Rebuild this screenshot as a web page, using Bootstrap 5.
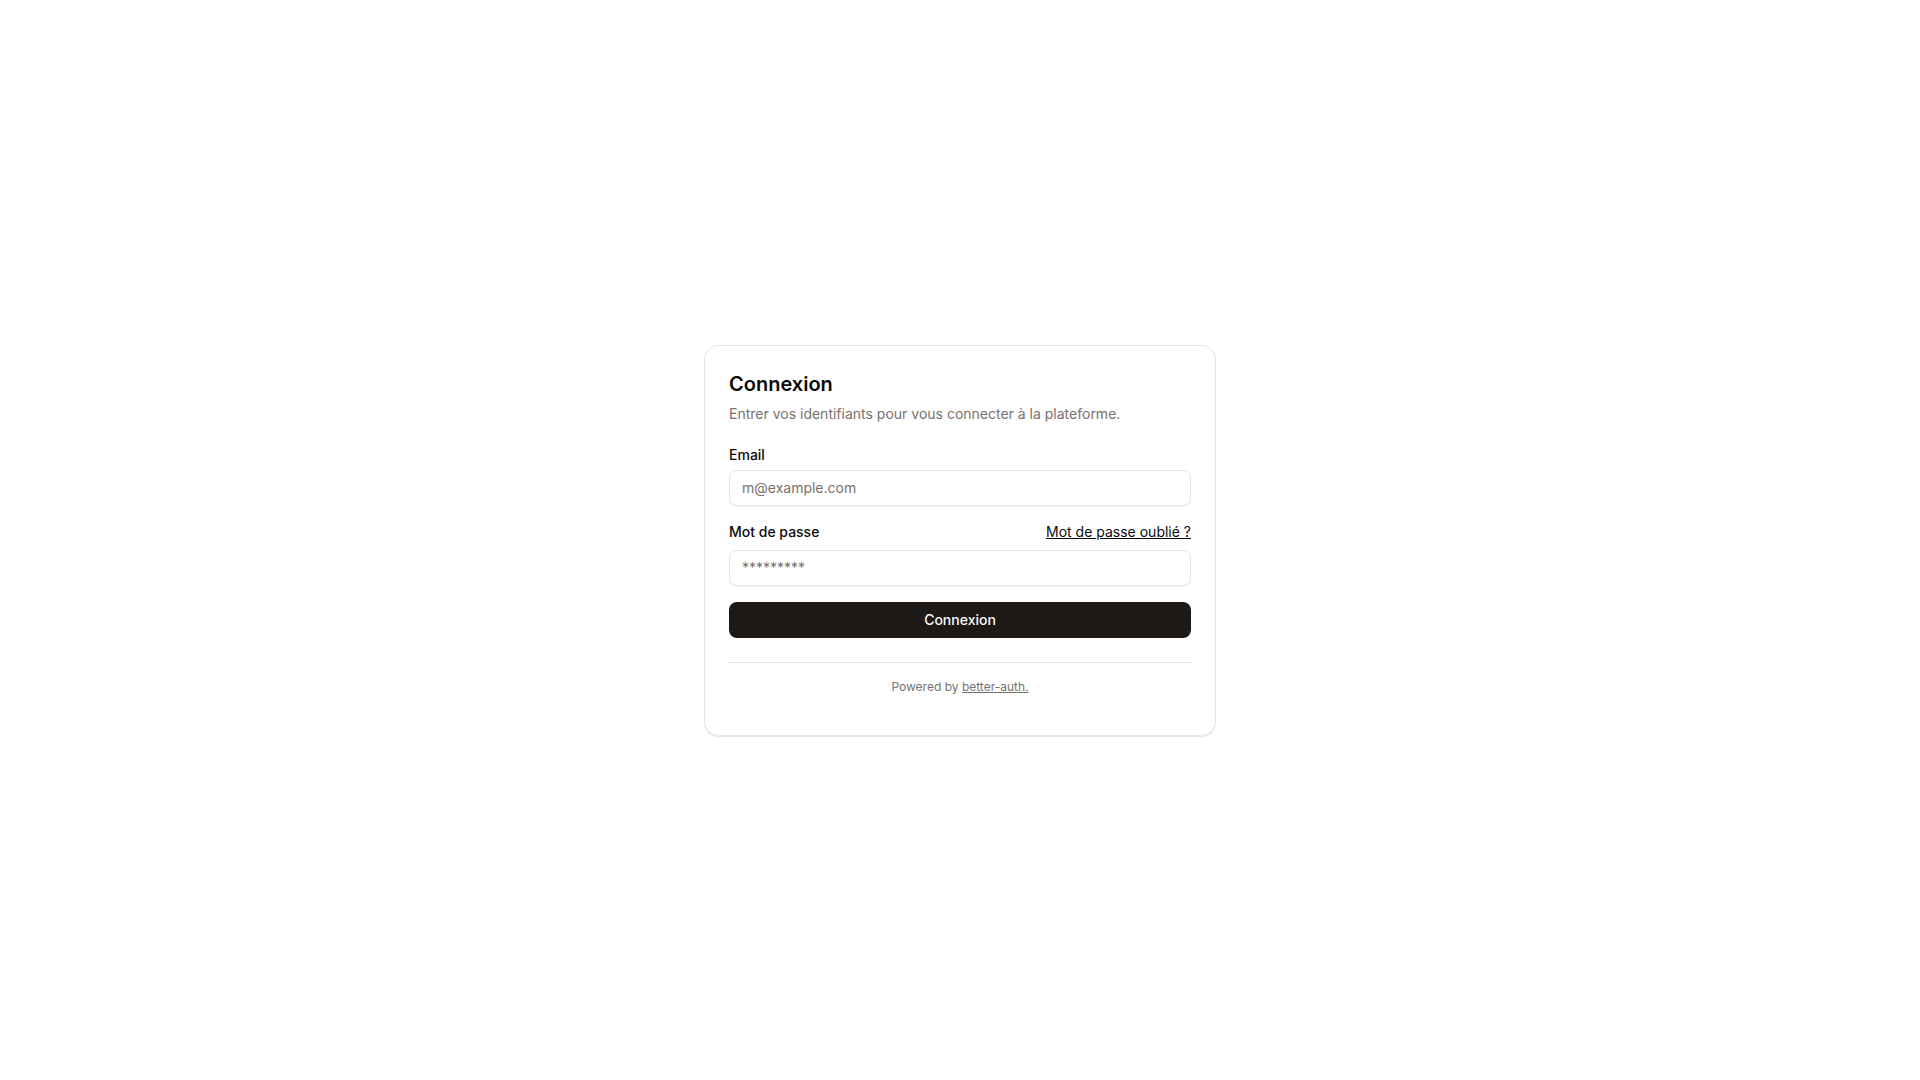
<!DOCTYPE html>
<html lang="fr">
<head>
<meta charset="utf-8">
<meta name="viewport" content="width=device-width, initial-scale=1">
<title>Connexion</title>
<link href="https://cdn.jsdelivr.net/npm/bootstrap@5.3.0/dist/css/bootstrap.min.css" rel="stylesheet">
<style>
:root { --ink: #0c0a09; --muted: #78716c; --line: #e5e5e5; }
body { font-family: Inter, sans-serif; font-size: 14px; line-height: 20px; color: var(--ink); background: #fff; }
.login-card { width: 100%; max-width: 512px; padding: 24px; border: 1px solid var(--line); border-radius: 14px; box-shadow: 0 1px 0 rgba(0,0,0,.1); }
.login-title { font-size: 20px; line-height: 28px; font-weight: 600; margin-bottom: 6px; }
.login-hint { color: var(--muted); }
.login-form label { font-weight: 500; line-height: 14px; }
.login-form .form-control { height: 36px; padding: 4px 12px; font-size: 14px; line-height: 20px; border: 1px solid var(--line); border-radius: 8px; box-shadow: 0 1px 0 rgba(0,0,0,.05); }
.login-form .form-control::placeholder { color: var(--muted); opacity: 1; }
.login-form a { color: var(--ink); }
.btn-login { --bs-btn-color: #fafaf9; --bs-btn-bg: #1c1917; --bs-btn-hover-color: #fafaf9; --bs-btn-hover-bg: #33302e; --bs-btn-border-width: 0; height: 36px; font-size: 14px; line-height: 20px; font-weight: 500; border-radius: 8px; }
.login-footer { border-top: 1px solid var(--line); font-size: 12px; line-height: 16px; color: #737373; }
.login-footer a { color: inherit; }
</style>
</head>
<body>
<main class="min-vh-100 d-flex align-items-center justify-content-center">
  <section class="login-card">
    <h1 class="login-title">Connexion</h1>
    <p class="login-hint mb-4">Entrer vos identifiants pour vous connecter à la plateforme.</p>
    <form class="login-form d-grid gap-3">
      <div class="d-grid gap-2">
        <label for="email">Email</label>
        <input class="form-control" type="email" id="email" placeholder="m@example.com">
      </div>
      <div class="d-grid gap-2">
        <div class="d-flex justify-content-between align-items-center">
          <label for="password">Mot de passe</label>
          <a href="#">Mot de passe oublié ?</a>
        </div>
        <input class="form-control" type="password" id="password" placeholder="*********">
      </div>
      <button type="submit" class="btn btn-login w-100">Connexion</button>
    </form>
    <footer class="login-footer text-center mt-4 py-3">Powered by <a href="#">better-auth.</a></footer>
  </section>
</main>
<script src="https://cdn.jsdelivr.net/npm/bootstrap@5.3.0/dist/js/bootstrap.bundle.min.js"></script>
</body>
</html>
